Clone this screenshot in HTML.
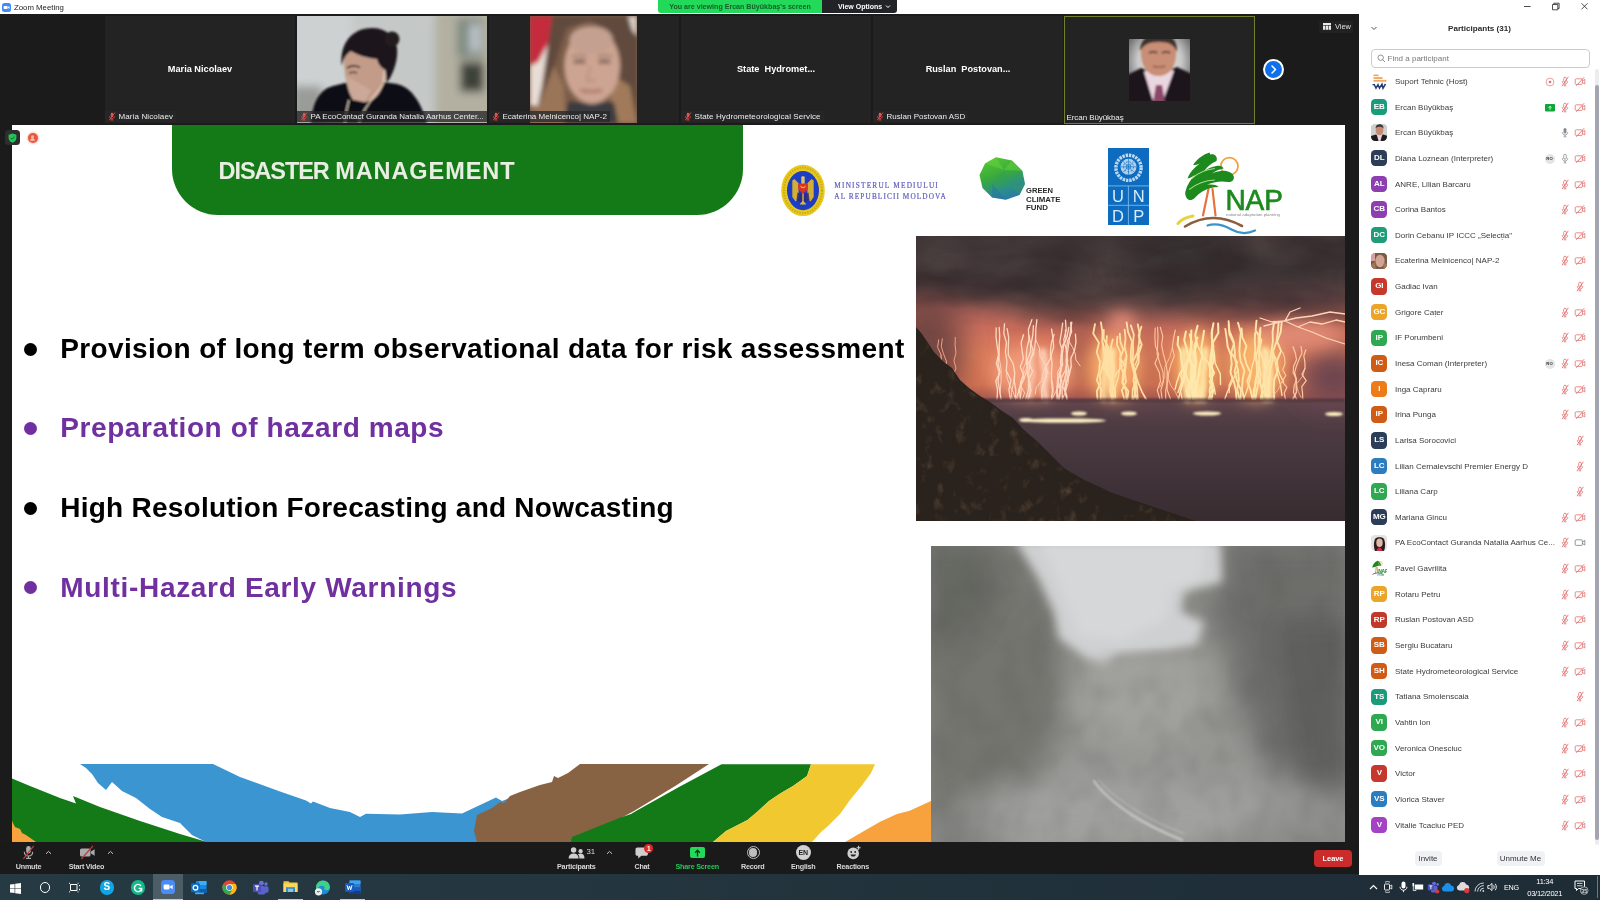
<!DOCTYPE html>
<html>
<head>
<meta charset="utf-8">
<title>Zoom Meeting</title>
<style>
*{box-sizing:border-box;margin:0;padding:0}
html,body{width:1600px;height:900px;overflow:hidden;background:#1b1b1b;font-family:"Liberation Sans",sans-serif;}
body{will-change:transform;position:relative}
.abs{position:absolute}
#titlebar{left:0;top:0;width:1359px;height:14.400px;background:#fff}
#titlebar .t{left:14px;top:2.600px;font-size:7.800px;color:#222;white-space:nowrap;line-height:10px}
#viewing{left:658px;top:0;width:164px;height:13px;background:#23d959;border-radius:0 0 0 3px;color:#14602a;font-weight:bold;font-size:7.100px;line-height:14.600px;text-align:center;white-space:nowrap;overflow:hidden}
#viewopt{left:822px;top:0;width:75px;height:13px;background:#222326;border-radius:0 0 3px 0;color:#fff;font-weight:bold;font-size:7px;line-height:14.600px;text-align:center;white-space:nowrap;padding-left:10px;overflow:hidden}
#gallery{left:0;top:14px;width:1359px;height:111px;background:#1b1b1b}
.tile{position:absolute;top:16px;height:107px;width:190px;background:#232323;overflow:hidden}
.tile .nm{position:absolute;left:0;right:0;top:47px;text-align:center;color:#fff;font-weight:bold;font-size:9.200px;line-height:12px;white-space:pre}
.tile .lb{position:absolute;left:0;bottom:1px;height:11px;padding:0 3px 0 13.500px;background:rgba(40,40,42,.78);color:#ececec;font-size:8px;line-height:11px;white-space:nowrap}
.tile .lb.nomic{padding-left:3px}
.tile .lb svg{position:absolute;left:3px;top:1px}
#slide{left:12px;top:125px;width:1333px;height:717px;background:#fff;overflow:hidden}
#slidetop{left:12.300px;top:124.600px;width:1332.700px;height:1px;background:#fff}
#greenhdr{left:160px;top:-10px;width:571px;height:100px;background:#137a17;border-radius:0 0 46px 46px}
#hdrtxt{left:206.600px;top:33px;font-size:23.500px;font-weight:bold;color:#e9eee2;letter-spacing:-.03px;white-space:nowrap;line-height:26px}
.bl{position:absolute;left:48.300px;font-size:28px;font-weight:bold;white-space:nowrap;line-height:30px;color:#000}
.bl.p{color:#7030a0}
.dot{position:absolute;left:12px;width:13px;height:13px;border-radius:50%;background:#000}
.dot.p{background:#7030a0}
#toolbar{left:0;top:842px;width:1359px;height:32px;background:#1a1a1a}
.tb{position:absolute;top:19.800px;font-size:7.200px;font-weight:bold;color:#d8d8d8;letter-spacing:-.22px;white-space:nowrap;line-height:9px;transform:translateX(-50%)}
#taskbar{left:0;top:874px;width:1600px;height:26px;background:linear-gradient(90deg,#263a44 0%,#24363f 35%,#1f2e38 80%,#1e2c36 100%)}
#panel{left:1359px;top:0;width:241px;height:875px;background:#fff;z-index:2}
.row{position:absolute;left:0;width:241px;height:18px}
.av{position:absolute;left:12px;top:.3px;width:16.400px;height:16.400px;border-radius:4.2px;color:#fff;font-weight:bold;font-size:8px;letter-spacing:-.2px;line-height:16.400px;text-align:center;overflow:hidden}
.pn{position:absolute;left:36px;top:3px;font-size:8px;line-height:11px;color:#3a3a3a;white-space:nowrap}
.ic{position:absolute;top:3px}
.btn{position:absolute;top:851px;height:15px;background:#f0f1f5;border-radius:4px;font-size:8px;line-height:15px;color:#333;text-align:center}
.tr{position:absolute;color:#fff;font-size:8px;line-height:10px;white-space:nowrap;transform:translateX(-50%)}
</style>
</head>
<body>
<div id="titlebar" class="abs">
  <svg class="abs" style="left:2px;top:3px" width="9" height="9" viewBox="0 0 9 9"><rect width="9" height="9" rx="2.5" fill="#3f8cf6"/><rect x="1.6" y="3" width="4" height="3" rx=".7" fill="#fff"/><path d="M5.9 4.2 7.5 3.1v2.8L5.9 4.8z" fill="#fff"/></svg>
  <div class="abs t">Zoom Meeting</div>
</div>
<div id="viewing" class="abs">You are viewing Ercan Büyükbaş's screen</div>
<div id="viewopt" class="abs">View Options <svg width="6" height="5" viewBox="0 0 6 5" style="margin-left:1px"><path d="M1 1.5 3 3.5 5 1.5" fill="none" stroke="#fff" stroke-width="1"/></svg></div>
<div id="gallery" class="abs"></div>
<div id="slidetop" class="abs"></div>
<svg width="0" height="0" style="position:absolute"><defs>
<symbol id="mutemic" viewBox="0 0 9 10"><rect x="3.100" y=".8" width="2.800" height="5" rx="1.400" fill="#e8524a"/><path d="M1.800 4.600c0 1.800 1.200 2.800 2.700 2.800s2.700-1 2.700-2.800M4.500 7.400v1.600M3 9h3" stroke="#e8524a" stroke-width=".8" fill="none"/><path d="M7.800 .6 1.400 9.200" stroke="#e8524a" stroke-width="1"/></symbol>
<filter id="tb1" x="-20%" y="-20%" width="140%" height="140%"><feGaussianBlur stdDeviation="1"/></filter>
<filter id="tb2" x="-20%" y="-20%" width="140%" height="140%"><feGaussianBlur stdDeviation="2"/></filter>
<filter id="tb4" x="-30%" y="-30%" width="160%" height="160%"><feGaussianBlur stdDeviation="4"/></filter>
</defs></svg>
<div class="tile" style="left:105px"><div class="nm">Maria Nicolaev</div><div class="lb" style="letter-spacing:.12px"><svg width="8" height="9"><use href="#mutemic"/></svg>Maria Nicolaev</div></div>
<div class="tile" style="left:297px">
<svg class="abs" style="left:0;top:0" width="190" height="107" viewBox="0 0 190 107">
<rect width="190" height="107" fill="#c4c8c7"/>
<g filter="url(#tb4)">
<rect x="-5" y="-5" width="60" height="80" fill="#cdd1d2"/>
<rect x="138" y="-5" width="60" height="120" fill="#b3b0a2"/>
<rect x="160" y="2" width="26" height="40" fill="#7e8a80"/>
<rect x="163" y="46" width="24" height="30" fill="#3c4238"/>
<rect x="172" y="8" width="12" height="28" fill="#b8c0c4"/>
<rect x="-5" y="70" width="30" height="40" fill="#9a9c9a"/>
</g>
<g filter="url(#tb1)">
<path d="M14 107c1-16 6-33 22-37l28-7 36 5c16 4 24 20 30 39z" fill="#0f0f12"/>
<path d="M47 44c0-14 10-22 22-22 14 0 22 10 22 24 0 10-2 18-6 26-3 8-10 14-17 14-6 0-12-4-15-10-4-8-6-20-6-32z" fill="#c29b89"/>
<path d="M50 60c-1 8 2 18 6 24l12 2 6-12z" fill="#cba897"/>
<path d="M45 50c-3-22 10-38 30-38 14 0 23 8 25 20 1 10-2 20-6 28-1 3-3 5-5 6 1-6 0-10-2-13-4-2-6-6-7-10-10-1-20-4-26-8-5 3-8 8-9 15z" fill="#1d191a"/>
<circle cx="95" cy="23" r="7.500" fill="#211c1d"/>
<path d="M50 52c4-2.500 9-2.500 13-.5" stroke="#30221f" stroke-width="1.600" fill="none"/>
<path d="M52 57c3-1 6-1 8 0" stroke="#4a3430" stroke-width="1.400" fill="none"/>
<path d="M88 54c-1 4-2 9-1.500 13M86 68c-6 10-18 20-24 38M52 84c-2 8-4 16-4 23" stroke="#e8dcc8" stroke-width="1.200" fill="none"/>
</g>
</svg>
<div class="lb"><svg width="8" height="9"><use href="#mutemic"/></svg>PA EcoContact Guranda Natalia Aarhus Center...</div></div>
<div class="tile" style="left:489px">
<svg class="abs" style="left:41px;top:0" width="107" height="107" viewBox="0 0 107 107">
<rect width="107" height="107" fill="#7a5c48"/>
<g filter="url(#tb2)">
<path d="M0 0H24L18 30 6 50H0z" fill="#c62a3c"/>
<path d="M0 50 8 46 20 24 26 0H34L24 40 14 70 8 90H0z" fill="#e8ddd6"/>
<path d="M22 0H107V107H70L86 60 80 20 60 4 36 12 24 50 14 107H4L12 70z" fill="#60483c"/>
<path d="M8 90 24 50 34 70 36 107H0V96z" fill="#9a7458"/>
<path d="M84 60 100 70 107 107H76z" fill="#a07a5a"/>
<path d="M98 0H107V20L102 14z" fill="#d8d0c8"/>
<path d="M38 86H84L88 107H34z" fill="#3a3a40"/>
<ellipse cx="62" cy="50" rx="28" ry="38" fill="#cda492"/>
<ellipse cx="61" cy="24" rx="22" ry="14" fill="#c4a090"/>
<path d="M42 41c4-2 10-2 14 0M68 41c4-2 10-2 14 0" stroke="#7a5a4c" stroke-width="1.600" fill="none"/><path d="M44 46.500c3-1.500 8-1.500 11 0M69 46.500c3-1.500 8-1.500 11 0" stroke="#3a2a28" stroke-width="2.600" fill="none"/>
<path d="M50 74c6 2 16 2 22 0" stroke="#a86860" stroke-width="2.400" fill="none"/>
<path d="M60 50c-1 6-3 10-3 14 2 1.500 6 1.500 8 0" stroke="#b08878" stroke-width="1.600" fill="none"/>
</g>
</svg>
<div class="lb"><svg width="8" height="9"><use href="#mutemic"/></svg>Ecaterina Melnicenco| NAP-2</div></div>
<div class="tile" style="left:681px"><div class="nm">State  Hydromet...</div><div class="lb" style="letter-spacing:.09px"><svg width="8" height="9"><use href="#mutemic"/></svg>State Hydrometeorological Service</div></div>
<div class="tile" style="left:873px"><div class="nm">Ruslan  Postovan...</div><div class="lb"><svg width="8" height="9"><use href="#mutemic"/></svg>Ruslan Postovan ASD</div></div>
<div class="tile" style="left:1064px;width:191px;top:15.500px;height:108px;border:1px solid #6f7f2c">
<svg class="abs" style="left:64px;top:22.500px" width="61" height="62" viewBox="0 0 61 62">
<defs><radialGradient id="erbg" cx=".5" cy=".35" r=".6"><stop offset="0" stop-color="#f4f4f4"/><stop offset=".6" stop-color="#c8c8c8"/><stop offset="1" stop-color="#6a6a6a"/></radialGradient></defs>
<rect width="61" height="62" fill="url(#erbg)"/>
<g filter="url(#tb1)">
<path d="M-2 36 12 29 20 32 30 52 40 31 48 28 63 35V64H-2z" fill="#1b181a"/>
<path d="M15 33 22 28 38 28 45 32 34 62H24z" fill="#ead6e0"/>
<path d="M27 46h6l3 17h-12z" fill="#8a4668"/>
<path d="M12 14C12 2 20-4 29.500-4S48 2 47 15c0 12-6 22-17.500 22S12 26 12 14z" fill="#c88e76"/>
<path d="M11 12C11 0 20-6 30-6S49 0 48 13c-3-7-7-10-18-10S15 6 11 12z" fill="#3a302c"/>
<path d="M20 14c3-1.500 6-1.500 8 0M33 14c3-1.500 6-1.500 8 0" stroke="#3a2a26" stroke-width="1.600" fill="none"/>
<path d="M24 27c3 1.500 9 1.500 12 0" stroke="#9a5a50" stroke-width="1.400" fill="none"/>
</g>
</svg>
<div class="lb nomic" style="background:none;bottom:0;padding-left:1.500px;letter-spacing:-.08px">Ercan Büyükbaş</div></div>
<!-- next arrow -->
<div class="abs" style="left:1263px;top:59px;width:21px;height:21px;border-radius:50%;background:#fff"></div>
<div class="abs" style="left:1265px;top:61px;width:17px;height:17px;border-radius:50%;background:#0e71eb"></div>
<svg class="abs" style="left:1269px;top:64px" width="9" height="11" viewBox="0 0 9 11"><path d="M3 2 6.500 5.500 3 9" stroke="#fff" stroke-width="1.500" fill="none" stroke-linecap="round" stroke-linejoin="round"/></svg>
<!-- view button -->
<div class="abs" style="left:1319px;top:21px;width:34px;height:12px;background:#222;border-radius:2px"></div>
<svg class="abs" style="left:1323px;top:23px" width="8" height="7" viewBox="0 0 8 7"><rect x="0" y="0" width="8" height="2" fill="#e8e8e8"/><rect x="0" y="2.600" width="2.300" height="4.200" fill="#e8e8e8"/><rect x="2.850" y="2.600" width="2.300" height="4.200" fill="#e8e8e8"/><rect x="5.700" y="2.600" width="2.300" height="4.200" fill="#e8e8e8"/></svg>
<div class="abs" style="left:1335px;top:22px;font-size:7.400px;line-height:10px;color:#e0e0e0">View</div>
<!-- slide overlay icons -->
<div id="slide" class="abs">
<div id="greenhdr" class="abs"></div>
<div id="hdrtxt" class="abs"><span style="letter-spacing:-1.1px">DISASTER</span> <span style="letter-spacing:.93px">MANAGEMENT</span></div>
<div class="dot" style="top:217.5px"></div>
<div class="bl" style="top:208.500px;letter-spacing:.348px">Provision of long term observational data for risk assessment</div>
<div class="dot p" style="top:296.5px"></div>
<div class="bl p" style="top:288.200px;letter-spacing:.58px">Preparation of hazard maps</div>
<div class="dot" style="top:376.5px"></div>
<div class="bl" style="top:367.900px;letter-spacing:.237px">High Resolution Forecasting and Nowcasting</div>
<div class="dot p" style="top:456px"></div>
<div class="bl p" style="top:447.600px;letter-spacing:.68px">Multi-Hazard Early Warnings</div>
<svg class="abs" style="left:0;top:0" width="1333" height="717" viewBox="12 125 1333 717" font-family="Liberation Sans, sans-serif">
<defs>
<filter id="b05" x="-20%" y="-20%" width="140%" height="140%"><feGaussianBlur stdDeviation=".5"/></filter>
<filter id="b1" x="-20%" y="-20%" width="140%" height="140%"><feGaussianBlur stdDeviation="1"/></filter>
<filter id="b2" x="-20%" y="-20%" width="140%" height="140%"><feGaussianBlur stdDeviation="2"/></filter>
<filter id="b3" x="-20%" y="-20%" width="140%" height="140%"><feGaussianBlur stdDeviation="3"/></filter>
<filter id="b5" x="-30%" y="-30%" width="160%" height="160%"><feGaussianBlur stdDeviation="5"/></filter>
<filter id="b8" x="-30%" y="-30%" width="160%" height="160%"><feGaussianBlur stdDeviation="8"/></filter>
<filter id="b14" x="-40%" y="-40%" width="180%" height="180%"><feGaussianBlur stdDeviation="14"/></filter>
<linearGradient id="gcf" x1="0.2" y1="0" x2="0.6" y2="1"><stop offset="0" stop-color="#55c832"/><stop offset=".45" stop-color="#38a83e"/><stop offset=".75" stop-color="#2d8f86"/><stop offset="1" stop-color="#2b7ba6"/></linearGradient>
</defs>
<!-- Ministry emblem -->
<g filter="url(#b05)">
<ellipse cx="803" cy="190.400" rx="21.800" ry="25.700" fill="#e8c81e"/>
<ellipse cx="803" cy="190.400" rx="19" ry="22.800" fill="none" stroke="#a08a24" stroke-width="2" stroke-dasharray="1.300 1.400" opacity=".5"/>
<ellipse cx="803" cy="190.600" rx="16" ry="19.600" fill="#1d3ec4"/>
<path d="M792.300 180.500 794.500 179 798.600 183.200V198.500L795.500 201.500 792.300 197z" fill="#d2ae34"/>
<path d="M813.700 180.500 811.500 179 807.400 183.200V198.500L810.500 201.500 813.700 197z" fill="#d2ae34"/>
<path d="M801.300 177.200C801.300 176 804.700 176 804.700 177.200V184H801.300z" fill="#dcc070"/>
<path d="M798.200 183.500H807.800V189.500L803 193.600 798.200 189.500z" fill="#d9302a"/>
<path d="M800.600 186.200A2.600 2.600 0 0 0 805.400 186.200 2.900 2.900 0 0 1 800.600 186.200z" fill="#f0c828" stroke="#f0c828" stroke-width=".8"/>
<path d="M797.500 192.500 803 194.500 808.500 192.500 809.500 200 803 203 796.500 200z" fill="#30287e" opacity=".85"/>
<path d="M803 193.500V205M800.500 204.500 803 201.500 805.500 204.500" stroke="#e0c23a" stroke-width="1.300" fill="none"/>
</g>
<g fill="#5f5bbb" font-family="Liberation Serif, serif" font-size="7.300" filter="url(#b05)" stroke="#5f5bbb" stroke-width=".18">
<text x="834.300" y="188.400" textLength="103.500" lengthAdjust="spacing">MINISTERUL MEDIULUI</text>
<text x="834.300" y="198.800" textLength="111.500" lengthAdjust="spacing">AL REPUBLICII MOLDOVA</text>
</g>
<!-- GCF -->
<g filter="url(#b05)">
<path d="M996 157.200 1012 160.500 1022.500 171 1025 184 1019.500 195 1006 199.800 992 197.500 982.500 188 979.500 175 985 163.500z" fill="url(#gcf)"/>
<path d="M996 157.200 1004 170 985 163.500zM1004 170 1022.500 171 1012 160.500z" fill="#6ad83a" opacity=".45"/>
<path d="M1004 170 1010 186 992 184zM1010 186 1025 184 1019.500 195z" fill="#2f9d57" opacity=".4"/>
<path d="M992 184 1006 199.800 992 197.500z" fill="#2a6fa8" opacity=".4"/>
</g>
<g fill="#2b2b2b" font-weight="bold" font-size="6.600" filter="url(#b05)">
<text x="1026" y="193.200" textLength="27" lengthAdjust="spacingAndGlyphs">GREEN</text>
<text x="1026" y="201.900" textLength="34.500" lengthAdjust="spacingAndGlyphs">CLIMATE</text>
<text x="1026" y="210.100" textLength="22" lengthAdjust="spacingAndGlyphs">FUND</text>
</g>
<!-- UNDP -->
<rect x="1108" y="148" width="41" height="77" fill="#0d6cc0"/>
<g stroke="#7db8e8" stroke-width=".9"><path d="M1108 185.900h41M1108 205.300h41M1128.400 185.900v39.100"/></g>
<g filter="url(#b05)">
<circle cx="1128.500" cy="167.800" r="12.600" fill="none" stroke="#d6e9f8" stroke-width="3.400" stroke-dasharray="2.400 .9" opacity=".88"/>
<circle cx="1128.500" cy="166.800" r="8" fill="#c6def3" opacity=".88"/>
<circle cx="1128.500" cy="166.800" r="5" fill="none" stroke="#0d6cc0" stroke-width=".8" stroke-dasharray="1.800 1.600"/>
<circle cx="1128.500" cy="166.800" r="2.400" fill="none" stroke="#0d6cc0" stroke-width=".7"/>
<path d="M1120.500 166.800h16M1128.500 158.800v16M1123 161.300l11 11M1134 161.300l-11 11" stroke="#0d6cc0" stroke-width=".6"/>
</g>
<g fill="#d8ecfb" font-size="16.500" text-anchor="middle">
<text x="1118" y="202.300">U</text><text x="1138.800" y="202.300">N</text>
<text x="1118" y="222">D</text><text x="1138.800" y="222">P</text>
</g>
<!-- NAP -->
<g filter="url(#b05)">
<circle cx="1229.400" cy="166.300" r="8.600" fill="none" stroke="#f0a040" stroke-width="1.700"/>
<path d="M1208.500 189 1203 215.500M1212.500 189 1215.500 215.500" stroke="#e8713c" stroke-width="2.200" fill="none" stroke-linecap="round"/>
<path transform="translate(1185 0) scale(.85 1) translate(-1185 0)" d="M1214 152.500c-6 1.500-14 5.500-19.500 12.500 3 0 5-.5 8-1.500-6 3.500-12 9-14.500 15 3-.5 6-2 9-3.500-5 4-9.500 9.500-11.500 16.500-1 4 1.500 8 5 8.500 4 .5 7-3 10-5.500 6-4.500 15-7.500 24-7.500-3-2.500-9-3-14-2 7-3 17-4.500 25-3 3.500.5 7.500-1.500 7-5-.5-3.500-5-5.500-9.500-6-5-.5-11 .5-16 2.500 3.500-2.500 8.500-4.500 13.500-5-1.500-2.500-5-3-8.500-2.500-5 .5-10 2.500-14.500 5 4-4.500 9-8 14.500-10 1.500-3-.5-5.500-3-6.500-1.500-.5-3.500-.5-4.500 0z" fill="#1a8a1c"/>
<path transform="translate(1185 0) scale(.85 1) translate(-1185 0)" d="M1193 178.500c7-5.500 17-9 27-10M1190 189.500c8-5.500 18-9 30-9.500" stroke="#b8e8a0" stroke-width="1.100" fill="none" opacity=".9"/>
<path d="M1178 223.500c3.500-4 9-6.500 15-7.500" stroke="#e8d23c" stroke-width="3" fill="none" stroke-linecap="round"/>
<path d="M1185 226.500c18-11 38-11 57-.5" stroke="#8b5e3c" stroke-width="2.600" fill="none" stroke-linecap="round"/>
<path d="M1207.500 225.500c9-3 17 0 24 4 8 4.500 16 4.500 23.500 1" stroke="#3a94c8" stroke-width="2.200" fill="none" stroke-linecap="round"/>
</g>
<text x="1225.400" y="210.300" font-size="28.600" fill="#1d8a1d" stroke="#1d8a1d" stroke-width=".7" textLength="57.500" lengthAdjust="spacingAndGlyphs">NAP</text>
<text x="1226" y="215.600" font-size="3.800" fill="#888" textLength="54" lengthAdjust="spacingAndGlyphs" filter="url(#b05)">national adaptation planning</text>
<!-- brush strokes -->
<g>
<path d="M80 764H213L240 777 280 791.500 306 800.500 311 803.500 313 801.500 330 808 350 812 360 817 366 813.800 400 814.600 432 812 462 813.400 496 797.400 502 801 510 798 510 842H206L192 835 180 823 162 817 150 809 136 798 122 791 112 782 106 790 98 783 92 774 86 768z" fill="#3a95d0"/>
<path d="M12 778.500 30 786 60 798 76 803.500 73 796 100 807 140 821 180 834 207 842H12z" fill="#137a17"/>
<path d="M12 821 15 827 20 829 22 833 26 835 36 842H12z" fill="#f8a23e"/>
<path d="M580 764H709L676 785.500 634 811 621 818 572 838 570 842H477L474 831 477 815 492 808 500 802 504 803 510 796 520 792 540 785 552 782 554 776 558 778 568 773z" fill="#876344"/>
<path d="M721.500 764.300H811L807 776 793 786 781 793 769 801 757 812 747.500 820 726 831 713 842H570L572 837 620.500 817.500 631 814 636 811 679 787z" fill="#137a17"/>
<path d="M811 764.300H875L871 773 861.500 786 850 800 840 814 828 826 821 832 812 842H713L726 831 747.500 820 757 812 769 801 781 793 793 786 807 776z" fill="#f1c830"/>
<path d="M845 842 864 831 880.500 821.500 897 814 909 811 931 801V842z" fill="#f8a23e"/>
</g>
<defs>
<linearGradient id="cmg" x1="0" y1="0" x2="0" y2="1"><stop offset="0" stop-color="#fff"/><stop offset=".6" stop-color="#fff"/><stop offset="1" stop-color="#000"/></linearGradient><mask id="cloudmask"><rect x="916" y="236" width="429" height="100" fill="url(#cmg)"/></mask>
<clipPath id="cl1"><rect x="916" y="236" width="429" height="285"/></clipPath>
<linearGradient id="sky1" x1="0" y1="0" x2="0" y2="1">
<stop offset="0" stop-color="#3f3536"/><stop offset=".13" stop-color="#473b3b"/><stop offset=".2" stop-color="#5e4343"/><stop offset=".255" stop-color="#9a5a52"/><stop offset=".32" stop-color="#cf705e"/><stop offset=".42" stop-color="#dc7c5a"/><stop offset=".52" stop-color="#d27252"/><stop offset=".568" stop-color="#a85a50"/><stop offset=".582" stop-color="#5e444c"/><stop offset=".66" stop-color="#4e3c43"/><stop offset=".8" stop-color="#43353b"/><stop offset="1" stop-color="#382c31"/></linearGradient>
<filter id="rock" x="0" y="0" width="100%" height="100%" color-interpolation-filters="sRGB"><feTurbulence type="fractalNoise" baseFrequency=".09 .07" numOctaves="3" seed="4" result="n"/><feColorMatrix in="n" type="matrix" values="0 0 0 0 .31  0 0 0 0 .25  0 0 0 0 .2  2.4 1.2 0 0 -1.95"/><feComposite in2="SourceGraphic" operator="in"/></filter>
<filter id="cloud" x="0" y="0" width="100%" height="100%" color-interpolation-filters="sRGB"><feTurbulence type="fractalNoise" baseFrequency=".012 .03" numOctaves="3" seed="11" result="n"/><feColorMatrix in="n" type="matrix" values="0 0 0 0 .17  0 0 0 0 .13  0 0 0 0 .14  2.2 0 0 0 -.8"/><feComposite in2="SourceGraphic" operator="in"/></filter>
</defs>
<g clip-path="url(#cl1)">
<rect x="916" y="236" width="429" height="285" fill="url(#sky1)"/>
<g filter="url(#b14)">
<ellipse cx="1010" cy="262" rx="130" ry="28" fill="#4a3d3e"/>
<ellipse cx="1245" cy="258" rx="130" ry="34" fill="#393032"/>
<ellipse cx="1120" cy="298" rx="120" ry="14" fill="#4e3c3c"/>
<ellipse cx="1290" cy="300" rx="80" ry="12" fill="#5a4042"/>
<ellipse cx="1290" cy="236" rx="60" ry="10" fill="#6a5a56"/>
<ellipse cx="928" cy="350" rx="36" ry="56" fill="#744642"/>
<ellipse cx="1334" cy="378" rx="36" ry="30" fill="#6c4450"/>
<ellipse cx="1080" cy="355" rx="9" ry="40" fill="#8a4c44"/>
<ellipse cx="1144" cy="360" rx="6" ry="36" fill="#a05a4c"/>
<ellipse cx="1224" cy="365" rx="6" ry="32" fill="#a85e4e"/>
</g>
<g mask="url(#cloudmask)"><rect x="916" y="236" width="429" height="100" fill="#000" filter="url(#cloud)" opacity=".6"/></g>
<g filter="url(#b8)">
<ellipse cx="1032" cy="372" rx="42" ry="26" fill="#f09a78"/>
<ellipse cx="1114" cy="368" rx="26" ry="32" fill="#f8a868"/>
<ellipse cx="1196" cy="366" rx="20" ry="34" fill="#fcb466"/>
<ellipse cx="1256" cy="366" rx="26" ry="34" fill="#fab068"/>
<ellipse cx="1300" cy="335" rx="44" ry="14" fill="#e08a74"/>
<ellipse cx="1122" cy="322" rx="14" ry="10" fill="#e8907c"/>
</g>
<g filter="url(#b2)" fill="none" stroke-linecap="round" stroke-linejoin="round">
<path d="M1104.5 350 1104.5 362.2 1104.5 374.5 1103 386.8 1103.5 399" stroke="#ffe2a6" stroke-width="5"/>
<path d="M1113.4 350 1112.9 362.2 1113.7 374.5 1112.6 386.8 1112.6 399" stroke="#ffe2a6" stroke-width="5"/>
<path d="M1108.4 350 1110.1 362.2 1110.7 374.5 1110.9 386.8 1113.2 399" stroke="#ffe2a6" stroke-width="5"/>
<path d="M1205.4 350 1204.5 362.2 1202.7 374.5 1203.2 386.8 1202.6 399" stroke="#ffe8a8" stroke-width="6"/>
<path d="M1183.7 350 1184.4 362.2 1184 374.5 1186.3 386.8 1187.5 399" stroke="#ffe8a8" stroke-width="6"/>
<path d="M1192.1 350 1193.8 362.2 1192.8 374.5 1196.5 386.8 1196.7 399" stroke="#ffe8a8" stroke-width="6"/>
<path d="M1265 350 1263.2 362.2 1265 374.5 1264.4 386.8 1264.9 399" stroke="#ffe2a6" stroke-width="5"/>
<path d="M1266.8 350 1269.1 362.2 1270.6 374.5 1270.4 386.8 1270.4 399" stroke="#ffe2a6" stroke-width="5"/>
<path d="M1263 350 1265.7 362.2 1264.5 374.5 1267.1 386.8 1266.1 399" stroke="#ffe2a6" stroke-width="5"/>
<path d="M1044.1 350 1046.1 362.2 1047.5 374.5 1044.9 386.8 1047.5 399" stroke="#ffd8c0" stroke-width="3"/>
<path d="M1033.1 350 1031.1 362.2 1033.4 374.5 1030.3 386.8 1030.5 399" stroke="#ffd8c0" stroke-width="3"/>
<path d="M1040.9 350 1041.8 362.2 1044.4 374.5 1042.4 386.8 1044.5 399" stroke="#ffd8c0" stroke-width="3"/>
</g>
<g filter="url(#b05)" fill="none" stroke-linecap="round" stroke-linejoin="round">
<path d="M938.7 339.8 937.6 347.2 941 354.6 941.2 362 940.6 369.4 944 376.8 942.6 384.2 945.7 391.6 947.1 399" stroke="#f0a088" stroke-width="1"/>
<path d="M941 354.6 941.6 360 943.5 365.5 942.6 370.9 942.5 376.3" stroke="#f0a088" stroke-width="0.7"/>
<path d="M942.3 338.8 941.3 346.3 943.5 353.8 946.5 361.4 945.7 368.9 948.5 376.4 950.4 383.9 951.9 391.5 952.8 399" stroke="#f0a088" stroke-width="1"/>
<path d="M946.5 361.4 942.5 370.6 939.4 379.9 939.1 389.2 935.4 398.5" stroke="#f0a088" stroke-width="0.7"/>
<path d="M955.3 337.4 955.1 345.1 956 352.8 954 360.5 956 368.2 952.8 375.9 951.8 383.6 951.1 391.3 952.4 399" stroke="#f0a088" stroke-width="1"/>
<path d="M996.2 327.9 996 336.8 997.1 345.7 998.5 354.6 996.4 363.5 999.2 372.3 998 381.2 999.6 390.1 1001 399" stroke="#ffd8c0" stroke-width="1.3"/>
<path d="M1036.9 319.6 1035.8 329.5 1035.6 339.4 1034.4 349.3 1030.5 359.3 1029.2 369.2 1028.5 379.1 1028.7 389.1 1025.8 399" stroke="#ffd8c0" stroke-width="1.3"/>
<path d="M1035.6 339.4 1039.4 348 1040.1 356.5 1045.7 365.1 1048.1 373.6" stroke="#ffd8c0" stroke-width="0.9"/>
<path d="M1054.1 334.4 1051.5 342.5 1050.5 350.6 1050.5 358.6 1045.7 366.7 1046.5 374.8 1043.5 382.9 1041.7 390.9 1042.2 399" stroke="#ffd8c0" stroke-width="1.3"/>
<path d="M1045.7 366.7 1042.6 373.6 1042 380.4 1036.2 387.3 1035.3 394.1" stroke="#ffd8c0" stroke-width="0.9"/>
<path d="M1029 335.7 1030.5 343.6 1030.6 351.5 1027.4 359.4 1027.9 367.3 1027.5 375.3 1030.1 383.2 1030.3 391.1 1027.8 399" stroke="#ffd8c0" stroke-width="1.3"/>
<path d="M1027.4 359.4 1023 369.3 1023.8 379.2 1018.8 389.1 1017.6 399" stroke="#ffd8c0" stroke-width="0.9"/>
<path d="M1007.1 328.7 1008.7 337.5 1008.3 346.3 1008.3 355.1 1013.2 363.8 1014.7 372.6 1014.3 381.4 1015.8 390.2 1015.6 399" stroke="#ffd8c0" stroke-width="1.3"/>
<path d="M1014.7 372.6 1013.9 379.2 1012.9 385.8 1011.4 392.4 1011.9 399" stroke="#ffd8c0" stroke-width="0.9"/>
<path d="M1065.5 320.2 1066.2 330 1063.7 339.9 1066.3 349.7 1066.4 359.6 1068.7 369.4 1067.1 379.3 1064.5 389.1 1066.9 399" stroke="#ffd8c0" stroke-width="1.3"/>
<path d="M1068.7 369.4 1065.6 376.3 1063.2 383.2 1059.8 390.1 1058.8 397" stroke="#ffd8c0" stroke-width="0.9"/>
<path d="M1068.8 327.3 1067.2 336.3 1063.7 345.2 1062.3 354.2 1062.1 363.2 1060.2 372.1 1061.6 381.1 1056.7 390 1057 399" stroke="#ffd8c0" stroke-width="1.3"/>
<path d="M1062.1 363.2 1057.7 372.1 1057.2 381.1 1056.6 390 1052.2 399" stroke="#ffd8c0" stroke-width="0.9"/>
<path d="M1062.7 323.2 1061.4 332.7 1059.8 342.2 1062.4 351.6 1060.5 361.1 1061.2 370.6 1058.3 380.1 1057.2 389.5 1058 399" stroke="#ffd8c0" stroke-width="1.3"/>
<path d="M1075.4 334.1 1076 342.2 1074.5 350.3 1070.8 358.5 1071.2 366.6 1069.3 374.7 1066.6 382.8 1065.5 390.9 1066.9 399" stroke="#ffd8c0" stroke-width="1.3"/>
<path d="M1071.2 366.6 1068.5 374.7 1068.2 382.8 1065.7 390.9 1062.6 399" stroke="#ffd8c0" stroke-width="0.9"/>
<path d="M1031.9 319.6 1028.4 329.5 1028.9 339.5 1026.8 349.4 1026.1 359.3 1027.3 369.2 1023.9 379.2 1019.3 389.1 1020.5 399" stroke="#ffd8c0" stroke-width="1.3"/>
<path d="M1023.5 334.7 1021.1 342.7 1022.1 350.8 1023.4 358.8 1020.3 366.8 1023.4 374.9 1020.6 382.9 1021.2 391 1020.1 399" stroke="#ffd8c0" stroke-width="1.3"/>
<path d="M1023.4 374.9 1021.5 380.9 1021.5 386.9 1024.6 393 1022.4 399" stroke="#ffd8c0" stroke-width="0.9"/>
<path d="M999.2 327.3 999.7 336.3 999.2 345.2 998.9 354.2 998 363.2 1000.1 372.1 995.8 381.1 997.5 390 997 399" stroke="#ffd8c0" stroke-width="1.3"/>
<path d="M999.2 345.2 999.1 357.2 1001.1 369.2 1001.1 381.2 1000 393.2" stroke="#ffd8c0" stroke-width="0.9"/>
<path d="M1004.5 323.9 1003.8 333.3 1006.4 342.6 1005.4 352 1007 361.4 1006.3 370.8 1011 380.2 1008.9 389.6 1010.4 399" stroke="#ffd8c0" stroke-width="1.3"/>
<path d="M1006.3 370.8 1007.1 377.9 1009.4 384.9 1013.2 392 1015.4 399" stroke="#ffd8c0" stroke-width="0.9"/>
<path d="M1065.4 330.2 1066 338.8 1061.9 347.4 1061 356 1062.7 364.6 1059.2 373.2 1058.1 381.8 1060.5 390.4 1058.7 399" stroke="#ffd8c0" stroke-width="1.3"/>
<path d="M1059.2 373.2 1061.5 379 1062.2 384.8 1064.3 390.6 1067.2 396.4" stroke="#ffd8c0" stroke-width="0.9"/>
<path d="M1051.6 329.2 1052.9 338 1053.7 346.7 1051.2 355.4 1052.1 364.1 1051.5 372.8 1051.5 381.6 1052.4 390.3 1051.4 399" stroke="#ffd8c0" stroke-width="1.3"/>
<path d="M1051.5 372.8 1051.6 379.4 1053.1 385.9 1053.3 392.5 1051.7 399" stroke="#ffd8c0" stroke-width="0.9"/>
<path d="M1071.8 322.1 1070.3 331.7 1069 341.3 1067.7 350.9 1066.1 360.5 1066.8 370.1 1064.3 379.8 1062 389.4 1062.4 399" stroke="#ffd8c0" stroke-width="1.3"/>
<path d="M1069 341.3 1072.6 347.4 1075.2 353.6 1075.9 359.8 1080.1 365.9" stroke="#ffd8c0" stroke-width="0.9"/>
<path d="M1070.7 322.4 1071.6 332 1067.3 341.5 1066.4 351.1 1067.6 360.7 1065.4 370.3 1060.5 379.8 1060.5 389.4 1059.4 399" stroke="#ffd8c0" stroke-width="1.3"/>
<path d="M1067.6 360.7 1065.4 368.4 1066 376 1065.3 383.7 1065.4 391.4" stroke="#ffd8c0" stroke-width="0.9"/>
<path d="M1033.4 325.7 1032.8 334.9 1031.1 344 1033.9 353.2 1028.9 362.3 1032.5 371.5 1028.3 380.7 1031 389.8 1028.5 399" stroke="#ffd8c0" stroke-width="1.3"/>
<path d="M1028.9 362.3 1024.8 371.5 1021 380.7 1018.9 389.8 1016 399" stroke="#ffd8c0" stroke-width="0.9"/>
<path d="M1141.4 326.7 1138.6 335.7 1141.7 344.7 1138.9 353.8 1138.6 362.8 1134.5 371.9 1133.4 380.9 1135.7 390 1133.7 399" stroke="#ffe0a4" stroke-width="1.8"/>
<path d="M1141.7 344.7 1138.4 349.9 1137.5 355 1137.2 360.1 1135.2 365.2" stroke="#ffe0a4" stroke-width="1.3"/>
<path d="M1095 324.2 1093.2 333.5 1099 342.9 1096.7 352.2 1100 361.6 1099.2 370.9 1096.9 380.3 1101.1 389.6 1100.7 399" stroke="#ffe0a4" stroke-width="1.8"/>
<path d="M1130.8 325.3 1133.8 334.5 1132.9 343.7 1133.1 352.9 1132.1 362.1 1134.1 371.3 1136 380.6 1134.6 389.8 1136.5 399" stroke="#ffe0a4" stroke-width="1.8"/>
<path d="M1126.6 322.3 1128 331.9 1131.9 341.5 1130.9 351.1 1130.9 360.7 1133.3 370.2 1135.8 379.8 1137.1 389.4 1137.7 399" stroke="#ffe0a4" stroke-width="1.8"/>
<path d="M1133.3 370.2 1135.4 377.4 1138.8 384.6 1142 391.8 1146.5 399" stroke="#ffe0a4" stroke-width="1.3"/>
<path d="M1137.8 324.5 1139.7 333.8 1139 343.1 1137.5 352.4 1132.6 361.8 1135 371.1 1135.7 380.4 1132.7 389.7 1132.3 399" stroke="#ffe0a4" stroke-width="1.8"/>
<path d="M1135 371.1 1136.8 378.1 1139.2 385 1142 392 1145.4 399" stroke="#ffe0a4" stroke-width="1.3"/>
<path d="M1103.8 330 1103.6 338.6 1108.3 347.3 1109.4 355.9 1108.2 364.5 1107.6 373.1 1112.4 381.8 1110 390.4 1112.1 399" stroke="#ffe0a4" stroke-width="1.8"/>
<path d="M1108.3 347.3 1106.3 352.9 1106.6 358.5 1103.8 364.2 1103.7 369.8" stroke="#ffe0a4" stroke-width="1.3"/>
<path d="M1117.4 336.7 1116.8 344.5 1120.3 352.3 1120.6 360.1 1121.3 367.9 1124.3 375.6 1122.6 383.4 1128.4 391.2 1127.3 399" stroke="#ffe0a4" stroke-width="1.8"/>
<path d="M1106.9 336.1 1106.2 344 1105.9 351.8 1104.5 359.7 1102.1 367.6 1099.9 375.4 1100.4 383.3 1096.8 391.1 1097.5 399" stroke="#ffe0a4" stroke-width="1.8"/>
<path d="M1124.6 329.7 1125.6 338.4 1124.6 347 1126.6 355.7 1125.8 364.4 1124.8 373 1126 381.7 1121.8 390.3 1124.3 399" stroke="#ffe0a4" stroke-width="1.8"/>
<path d="M1126.6 355.7 1124.3 361 1122.7 366.3 1117.4 371.6 1115 377" stroke="#ffe0a4" stroke-width="1.3"/>
<path d="M1100.9 322.3 1102.4 331.9 1102.3 341.5 1103.7 351.1 1106.1 360.7 1105.4 370.3 1111.2 379.8 1112.4 389.4 1111.7 399" stroke="#ffe0a4" stroke-width="1.8"/>
<path d="M1102.3 341.5 1105.2 350.1 1107.1 358.6 1106.4 367.2 1109.1 375.7" stroke="#ffe0a4" stroke-width="1.3"/>
<path d="M1119.8 333.7 1120.4 341.9 1123.3 350 1120.1 358.2 1125.2 366.3 1122.8 374.5 1122.3 382.7 1126.2 390.8 1126.3 399" stroke="#ffe0a4" stroke-width="1.8"/>
<path d="M1120.1 358.2 1119.7 368.1 1118.2 378 1115.1 387.8 1115.4 397.7" stroke="#ffe0a4" stroke-width="1.3"/>
<path d="M1112.8 339.5 1110.8 346.9 1111.4 354.4 1112.9 361.8 1114.1 369.3 1111.9 376.7 1112.9 384.1 1114.5 391.6 1113.2 399" stroke="#ffe0a4" stroke-width="1.8"/>
<path d="M1157.6 327.2 1158 336.2 1157.6 345.2 1157.1 354.1 1159.9 363.1 1163 372.1 1163.5 381.1 1160.9 390 1162.1 399" stroke="#ffc8a0" stroke-width="1.1"/>
<path d="M1160.3 327.3 1162.8 336.2 1161.6 345.2 1163.4 354.2 1165.9 363.1 1167.3 372.1 1166.8 381.1 1167.2 390 1170.5 399" stroke="#ffc8a0" stroke-width="1.1"/>
<path d="M1167.3 372.1 1168.2 378.8 1170.9 385.5 1175.6 392.3 1178.5 399" stroke="#ffc8a0" stroke-width="0.8"/>
<path d="M1155.2 328 1154.9 336.8 1155.4 345.7 1158.7 354.6 1154.9 363.5 1159.4 372.4 1160.5 381.2 1157.3 390.1 1159.9 399" stroke="#ffc8a0" stroke-width="1.1"/>
<path d="M1175.3 330.1 1173.5 338.7 1172.4 347.3 1174.3 355.9 1171 364.5 1168.6 373.1 1167.7 381.8 1165.7 390.4 1165.7 399" stroke="#ffc8a0" stroke-width="1.1"/>
<path d="M1172.4 347.3 1169.8 357.3 1164.7 367.2 1164.8 377.2 1159.8 387.2" stroke="#ffc8a0" stroke-width="0.8"/>
<path d="M1189.8 334.4 1191.9 342.4 1190.6 350.5 1189.1 358.6 1193.4 366.7 1192.1 374.8 1195.1 382.8 1194 390.9 1194.3 399" stroke="#ffe8ac" stroke-width="2"/>
<path d="M1190.6 350.5 1187.2 361 1185.3 371.5 1181.7 382 1178 392.5" stroke="#ffe8ac" stroke-width="1.4"/>
<path d="M1178.2 336.8 1177.6 344.6 1180.8 352.4 1181.4 360.1 1182.6 367.9 1186.2 375.7 1188.8 383.5 1186.4 391.2 1189 399" stroke="#ffe8ac" stroke-width="2"/>
<path d="M1182.6 367.9 1180.9 375.7 1182.9 383.5 1180.5 391.2 1182.1 399" stroke="#ffe8ac" stroke-width="1.4"/>
<path d="M1204 330.8 1202.8 339.3 1201.3 347.9 1202.5 356.4 1199.9 364.9 1199.6 373.4 1197.1 382 1195.8 390.5 1196.5 399" stroke="#ffe8ac" stroke-width="2"/>
<path d="M1199.9 364.9 1198.3 371.8 1197.8 378.8 1195.4 385.7 1192.6 392.7" stroke="#ffe8ac" stroke-width="1.4"/>
<path d="M1191.4 330.4 1191 339 1191.1 347.5 1189.9 356.1 1191.3 364.7 1195.1 373.3 1191 381.8 1193.2 390.4 1193.4 399" stroke="#ffe8ac" stroke-width="2"/>
<path d="M1189.9 356.1 1186.6 366.8 1184.8 377.6 1181.1 388.3 1178.5 399" stroke="#ffe8ac" stroke-width="1.4"/>
<path d="M1197.5 337.5 1194.6 345.2 1195.2 352.9 1196 360.6 1195.3 368.2 1195.2 375.9 1191.8 383.6 1188.6 391.3 1189.9 399" stroke="#ffe8ac" stroke-width="2"/>
<path d="M1212.2 329.5 1211.8 338.2 1213.5 346.9 1210.5 355.6 1210 364.2 1214.2 372.9 1209.6 381.6 1213.3 390.3 1211.5 399" stroke="#ffe8ac" stroke-width="2"/>
<path d="M1218.1 323.4 1218.4 332.8 1213.1 342.3 1212.6 351.7 1213.7 361.2 1209.8 370.6 1212.1 380.1 1212.2 389.5 1208.6 399" stroke="#ffe8ac" stroke-width="2"/>
<path d="M1209.8 370.6 1209.4 376.5 1212.7 382.3 1214.3 388.2 1215.3 394" stroke="#ffe8ac" stroke-width="1.4"/>
<path d="M1185.9 331.6 1184.2 340 1186.6 348.5 1188.2 356.9 1191.7 365.3 1190.8 373.7 1192.9 382.2 1191.6 390.6 1192.6 399" stroke="#ffe8ac" stroke-width="2"/>
<path d="M1188.2 356.9 1185.5 365 1179.9 373.1 1177.1 381.2 1175.1 389.2" stroke="#ffe8ac" stroke-width="1.4"/>
<path d="M1213.5 323.3 1211.6 332.8 1212.2 342.2 1211.5 351.7 1211.7 361.1 1212.3 370.6 1212 380.1 1209.7 389.5 1210 399" stroke="#ffe8ac" stroke-width="2"/>
<path d="M1212.2 342.2 1214.3 352.8 1215.2 363.3 1220.3 373.9 1220.5 384.4" stroke="#ffe8ac" stroke-width="1.4"/>
<path d="M1197.6 325.7 1195.2 334.9 1197 344 1193.6 353.2 1196.1 362.3 1192.8 371.5 1190.2 380.7 1189.4 389.8 1189.9 399" stroke="#ffe8ac" stroke-width="2"/>
<path d="M1197 344 1199.7 350.1 1202.2 356.2 1208.3 362.3 1209.6 368.4" stroke="#ffe8ac" stroke-width="1.4"/>
<path d="M1228.6 321.1 1229.4 330.8 1233.4 340.6 1234.7 350.3 1235.2 360 1237.9 369.8 1238.9 379.5 1237.2 389.3 1239.4 399" stroke="#ffe4a8" stroke-width="1.9"/>
<path d="M1237.9 369.8 1234.2 377.1 1230.9 384.4 1227.4 391.7 1224.8 399" stroke="#ffe4a8" stroke-width="1.3"/>
<path d="M1228.7 325 1229.4 334.3 1234 343.5 1231.2 352.8 1237.1 362 1234.6 371.3 1236.9 380.5 1240.8 389.8 1240.6 399" stroke="#ffe4a8" stroke-width="1.9"/>
<path d="M1241.6 328.5 1242.3 337.3 1246.5 346.1 1244.1 355 1246.3 363.8 1250.5 372.6 1247.3 381.4 1250.6 390.2 1252.5 399" stroke="#ffe4a8" stroke-width="1.9"/>
<path d="M1256.5 320.6 1255.6 330.4 1261.4 340.2 1259.3 350 1263.3 359.8 1265.4 369.6 1263.9 379.4 1264.9 389.2 1267.5 399" stroke="#ffe4a8" stroke-width="1.9"/>
<path d="M1255.1 332.9 1254.8 341.2 1255.3 349.4 1254.6 357.7 1259.2 365.9 1260.8 374.2 1260 382.5 1262.4 390.7 1260.8 399" stroke="#ffe4a8" stroke-width="1.9"/>
<path d="M1254.6 357.7 1251.7 368 1250.2 378.3 1247.5 388.7 1243.6 399" stroke="#ffe4a8" stroke-width="1.3"/>
<path d="M1281.7 322.4 1280.7 332 1277.2 341.5 1281.1 351.1 1276.9 360.7 1277.9 370.3 1274.2 379.8 1273.7 389.4 1274.1 399" stroke="#ffe4a8" stroke-width="1.9"/>
<path d="M1260.5 330.7 1259.8 339.3 1258.3 347.8 1256.2 356.3 1256.7 364.9 1257.1 373.4 1255.3 381.9 1254.8 390.5 1253.7 399" stroke="#ffe4a8" stroke-width="1.9"/>
<path d="M1257.1 373.4 1258.8 379.8 1260.8 386.2 1263.5 392.6 1267.8 399" stroke="#ffe4a8" stroke-width="1.3"/>
<path d="M1260.5 328 1258.5 336.9 1258.8 345.8 1259.2 354.7 1258.9 363.5 1258.6 372.4 1258.5 381.3 1256.9 390.1 1255.4 399" stroke="#ffe4a8" stroke-width="1.9"/>
<path d="M1258.9 363.5 1256.9 372.4 1256.9 381.3 1253.3 390.1 1253.1 399" stroke="#ffe4a8" stroke-width="1.3"/>
<path d="M1238 322.8 1240.8 332.3 1240 341.8 1239.4 351.3 1240.5 360.9 1244.4 370.4 1242.6 379.9 1242 389.5 1244.1 399" stroke="#ffe4a8" stroke-width="1.9"/>
<path d="M1274.2 321.8 1272.6 331.5 1272.9 341.1 1271.5 350.8 1270.4 360.4 1264.4 370.1 1264.3 379.7 1261.9 389.4 1262.4 399" stroke="#ffe4a8" stroke-width="1.9"/>
<path d="M1271.5 350.8 1276 358.6 1277.4 366.4 1279.6 374.2 1283.6 381.9" stroke="#ffe4a8" stroke-width="1.3"/>
<path d="M1278.7 321.9 1277.9 331.5 1276.6 341.2 1273.2 350.8 1272.7 360.5 1270.1 370.1 1269.1 379.7 1268.1 389.4 1268 399" stroke="#ffe4a8" stroke-width="1.9"/>
<path d="M1273.2 350.8 1275.1 362 1277.1 373.1 1280.3 384.2 1282 395.4" stroke="#ffe4a8" stroke-width="1.3"/>
<path d="M1225.3 328.9 1226.6 337.7 1227.6 346.4 1231 355.2 1231.7 364 1230.5 372.7 1233.9 381.5 1235.9 390.2 1236.5 399" stroke="#ffe4a8" stroke-width="1.9"/>
<path d="M1231.7 364 1230.3 371.1 1232.3 378.2 1229.1 385.3 1229.2 392.5" stroke="#ffe4a8" stroke-width="1.3"/>
<path d="M1293 346.7 1295.4 353.2 1296.5 359.7 1293.6 366.3 1293.2 372.8 1296.4 379.4 1294.1 385.9 1293.5 392.5 1296.5 399" stroke="#ffc8a0" stroke-width="1.2"/>
<path d="M1301 346.5 1302 353.1 1298.9 359.6 1296.4 366.2 1294.6 372.7 1296.5 379.3 1296 385.9 1296.4 392.4 1293.3 399" stroke="#ffc8a0" stroke-width="1.2"/>
<path d="M1294.6 372.7 1295.7 379 1296.6 385.3 1298.3 391.6 1301.3 397.9" stroke="#ffc8a0" stroke-width="0.8"/>
<path d="M1282.7 352.1 1284.6 357.9 1285 363.8 1282.7 369.7 1285.8 375.5 1282.1 381.4 1286.9 387.3 1284.2 393.1 1285.5 399" stroke="#ffc8a0" stroke-width="1.2"/>
<path d="M1282.1 381.4 1279.9 385.8 1277.8 390.2 1273.9 394.6 1270.5 399" stroke="#ffc8a0" stroke-width="0.8"/>
<path d="M1305.8 349.8 1303.8 356 1304.9 362.1 1305 368.3 1301.9 374.4 1306.2 380.6 1301.8 386.7 1302.5 392.9 1302.8 399" stroke="#ffc8a0" stroke-width="1.2"/>
<path d="M1305 368.3 1302.8 376 1296.7 383.6 1296.7 391.3 1292.2 399" stroke="#ffc8a0" stroke-width="0.8"/>
<path d="M1260 318 1272 322 1285 321 1298 327 1312 332 1326 338 1345 344M1264 326 1280 322 1296 318 1312 316 1330 312 1345 314M1298 327 1310 322 1322 324 1336 320 1345 322M1285 321 1290 312 1300 308" stroke="#ffd4b4" stroke-width="1.300"/>
</g>
<rect x="916" y="398.500" width="429" height="3.500" fill="#4e343c" opacity=".8" filter="url(#b1)"/>
<g filter="url(#b1)" fill="#fff0c4">
<ellipse cx="1079" cy="413.500" rx="8" ry="2"/><ellipse cx="1129" cy="413.500" rx="8" ry="2"/><ellipse cx="1207" cy="413.500" rx="14" ry="2"/><ellipse cx="1334" cy="414" rx="9" ry="2"/><ellipse cx="1064" cy="420.600" rx="42" ry="2.200"/><ellipse cx="1026" cy="420" rx="7" ry="2"/>
</g>
<g filter="url(#b05)">
<path id="hill" d="M916 327 922 334 934 352 944 362 952 368 960 380 969 388 980 396 990 402 1002 411 1013 418 1024 430 1038 442 1048 452 1056 460 1064 468 1072 473 1086 481 1098 486 1110 492 1124 497 1142 503 1160 509 1178 515 1196 521H916z" fill="#2a221f"/>
</g>
<rect x="916" y="320" width="290" height="201" fill="#000" filter="url(#rock)" clip-path="url(#hillclip)"/>
</g>
<defs><clipPath id="hillclip"><path d="M916 329 922 336 934 354 944 364 952 370 960 382 969 390 980 398 990 404 1002 413 1013 420 1024 432 1038 444 1048 454 1056 462 1064 470 1072 475 1086 483 1098 488 1110 494 1124 499 1142 505 1160 511 1178 517 1190 521H916z"/></clipPath></defs>
<defs>
<clipPath id="cl2"><rect x="931" y="546" width="414" height="296"/></clipPath>
<linearGradient id="fog1" x1="0" y1="0" x2="0" y2="1"><stop offset="0" stop-color="#8c8d87"/><stop offset=".4" stop-color="#93938f"/><stop offset=".75" stop-color="#959592"/><stop offset="1" stop-color="#91918f"/></linearGradient>
<filter id="fgn" x="0" y="0" width="100%" height="100%" color-interpolation-filters="sRGB"><feTurbulence type="fractalNoise" baseFrequency=".035 .03" numOctaves="2" seed="3" result="n"/><feColorMatrix in="n" type="matrix" values="0 0 0 0 .3  0 0 0 0 .3  0 0 0 0 .29  1.6 0 0 0 -.62"/><feComposite in2="SourceGraphic" operator="in"/></filter>
</defs>
<!-- fog photo -->
<g clip-path="url(#cl2)">
<rect x="931" y="546" width="414" height="296" fill="url(#fog1)"/>
<g filter="url(#b14)">
<path d="M920 536H1012L1038 578 1054 612 1060 650 1064 720 1040 775 990 800 920 830z" fill="#747570"/>
<path d="M920 536H985L998 590 975 640 920 660z" fill="#666862"/>
<path d="M1226 536H1356V800L1310 790 1262 760 1238 700 1226 640 1200 610 1224 585z" fill="#6d6d6a"/>
<path d="M1270 620H1356V790L1300 780z" fill="#5f5f5d"/>
<ellipse cx="1140" cy="700" rx="72" ry="44" fill="#a1a19d"/>
<ellipse cx="1130" cy="815" rx="175" ry="38" fill="#a0a09e"/>
<ellipse cx="1300" cy="836" rx="70" ry="22" fill="#8c8c8a"/>
<ellipse cx="955" cy="836" rx="46" ry="22" fill="#848482"/>
</g>
<rect x="931" y="546" width="414" height="296" fill="#000" filter="url(#fgn)" opacity=".2"/>
<g filter="url(#b5)">
<path d="M1015 540H1220.500L1222 582 1184 592 1181 612 1204 622 1197 645 1161 651 1118 655 1105 666 1086 658 1059 638 1054 612 1039 579z" fill="#cfd0d1"/>
<path d="M1040 540H1205L1200 580 1170 590 1165 620 1120 640 1080 636 1066 600z" fill="#d6d7d8"/>
</g>
<g filter="url(#b8)" opacity=".8">
<ellipse cx="1150" cy="668" rx="60" ry="12" fill="#a2a29e"/>
</g>
<g filter="url(#b1)" fill="none" stroke="#c8c8c8" stroke-linecap="round">
<path d="M1094 781c8 12 20 22 38 34 14 9 30 17 50 25" stroke-width="2.200"/>
<path d="M1099 780c8 11 22 21 40 32 14 9 28 15 46 22" stroke-width="1.200" opacity=".6"/>
</g>
</g>
</svg>
</div>
<div class="abs" style="left:5px;top:130px;width:15px;height:15px;border-radius:3.500px;background:#2e2e2e;z-index:3"></div>
<svg class="abs" style="left:8px;top:132.500px;z-index:3" width="9" height="10" viewBox="0 0 9 10"><path d="M4.500 .4 8.400 1.800V5c0 2.300-1.700 3.900-3.900 4.700C2.300 8.900 .6 7.300 .6 5V1.800z" fill="#22c55a"/><path d="M2.600 4.900 4 6.300 6.500 3.600" stroke="#0f6a30" stroke-width="1" fill="none"/></svg>
<div class="abs" style="left:27.500px;top:132.500px;width:10px;height:10px;border-radius:50%;background:#e8573f;box-shadow:0 0 2px 1px rgba(240,140,120,.45);z-index:3"></div>
<svg class="abs" style="left:30px;top:134.500px;z-index:3" width="5" height="6" viewBox="0 0 5 6"><circle cx="2.500" cy="1.700" r="1.500" fill="#f6b4a4"/><path d="M.2 6c0-2 1-3 2.300-3s2.300 1 2.300 3z" fill="#f6b4a4"/></svg>
<div id="toolbar" class="abs">
<!-- mic muted -->
<svg class="abs" style="left:20px;top:3px" width="17" height="15" viewBox="0 0 17 15"><rect x="6.200" y="1" width="4.600" height="7.600" rx="2.300" fill="#ababab"/><path d="M4.300 6.800c0 2.700 1.900 4.200 4.200 4.200s4.200-1.500 4.200-4.200M8.500 11v2.200M6 13.400h5" stroke="#ababab" stroke-width="1.100" fill="none"/><path d="M13.800 .8 3.400 13.800" stroke="#c23a3a" stroke-width="1.200"/></svg>
<div class="tb" style="left:28.500px">Unmute</div>
<svg class="abs" style="left:45px;top:8px" width="7" height="5" viewBox="0 0 7 5"><path d="M1 3.800 3.500 1.400 6 3.800" stroke="#c8c8c8" stroke-width="1" fill="none"/></svg>
<!-- video off -->
<svg class="abs" style="left:78px;top:3px" width="19" height="15" viewBox="0 0 19 15"><rect x="2" y="3.500" width="10.500" height="8" rx="1.600" fill="#ababab"/><path d="M13 6.600 16.600 4.200v6.600L13 8.400z" fill="#ababab"/><path d="M15 .8 3.400 14" stroke="#c23a3a" stroke-width="1.200"/></svg>
<div class="tb" style="left:86.500px">Start Video</div>
<svg class="abs" style="left:106.500px;top:8px" width="7" height="5" viewBox="0 0 7 5"><path d="M1 3.800 3.500 1.400 6 3.800" stroke="#c8c8c8" stroke-width="1" fill="none"/></svg>
<!-- participants -->
<svg class="abs" style="left:568px;top:4.500px" width="17" height="12" viewBox="0 0 17 12"><circle cx="5.600" cy="3" r="2.700" fill="#cfcfcf"/><path d="M.6 11.400c0-3.200 2-5 5-5s5 1.800 5 5z" fill="#cfcfcf"/><circle cx="12.600" cy="4.200" r="2.100" fill="#cfcfcf"/><path d="M11.400 11.400c0-1.800-.5-3.200-1.500-4.200.8-.5 1.700-.7 2.700-.7 2.400 0 3.900 1.500 3.900 4.900z" fill="#cfcfcf"/></svg>
<div class="abs" style="left:586.500px;top:5.500px;font-size:7.800px;line-height:8px;color:#d8d8d8">31</div>
<div class="tb" style="left:576.300px">Participants</div>
<svg class="abs" style="left:606px;top:8px" width="7" height="5" viewBox="0 0 7 5"><path d="M1 3.800 3.500 1.400 6 3.800" stroke="#c8c8c8" stroke-width="1" fill="none"/></svg>
<!-- chat -->
<svg class="abs" style="left:635px;top:4.500px" width="14" height="12" viewBox="0 0 14 12"><path d="M2.300 .5h8.800c1 0 1.800.8 1.800 1.800v4.600c0 1-.8 1.800-1.800 1.800H6.400L3.200 11.500V8.700h-.9c-1 0-1.800-.8-1.800-1.800V2.300c0-1 .8-1.800 1.800-1.800z" fill="#cfcfcf"/></svg>
<div class="abs" style="left:644.300px;top:1.500px;width:9px;height:9px;border-radius:50%;background:#e02a2a;color:#fff;font-size:6.500px;font-weight:bold;line-height:9px;text-align:center">1</div>
<div class="tb" style="left:642px">Chat</div>
<!-- share -->
<div class="abs" style="left:690px;top:5px;width:15px;height:11px;border-radius:2px;background:#23d959"></div>
<svg class="abs" style="left:694px;top:6.500px" width="7" height="8" viewBox="0 0 7 8"><path d="M3.500 7.500V2M1.200 3.800 3.500 1.200 5.800 3.800" stroke="#10301a" stroke-width="1.300" fill="none"/></svg>
<div class="tb" style="left:697.200px;color:#23c956">Share Screen</div>
<!-- record -->
<div class="abs" style="left:746.700px;top:4px;width:13px;height:13px;border-radius:50%;border:1.200px solid #bdbdbd"></div>
<div class="abs" style="left:748.900px;top:6.200px;width:8.600px;height:8.600px;border-radius:50%;background:#bdbdbd"></div>
<div class="tb" style="left:752.700px">Record</div>
<!-- english -->
<div class="abs" style="left:795.700px;top:3px;width:15px;height:15px;border-radius:50%;background:#d2d2d2;color:#222;font-size:7px;font-weight:bold;line-height:15px;text-align:center;letter-spacing:-.2px">EN</div>
<div class="tb" style="left:803.200px">English</div>
<!-- reactions -->
<svg class="abs" style="left:846px;top:2.500px" width="16" height="16" viewBox="0 0 16 16"><circle cx="7.200" cy="8.400" r="5.800" fill="#cfcfcf"/><circle cx="5.200" cy="7" r=".9" fill="#222"/><circle cx="9.200" cy="7" r=".9" fill="#222"/><path d="M4.400 9.400c.6 1.500 1.600 2.200 2.800 2.200s2.200-.7 2.800-2.200z" fill="#222"/><path d="M12.600 .8v4M10.600 2.800h4" stroke="#cfcfcf" stroke-width="1.100"/></svg>
<div class="tb" style="left:852.800px">Reactions</div>
<!-- leave -->
<div class="abs" style="left:1314px;top:8px;width:38px;height:17px;border-radius:4px;background:#cc2b2b;color:#fff;font-size:7.400px;font-weight:bold;line-height:17px;text-align:center">Leave</div>
</div>
<div id="panel" class="abs">
<svg width="0" height="0" style="position:absolute"><defs>
<filter id="tb05" x="-10%" y="-10%" width="120%" height="120%"><feGaussianBlur stdDeviation=".45"/></filter>
<symbol id="pmic" viewBox="0 0 10 11"><rect x="3.700" y="1.200" width="2.600" height="5" rx="1.300" fill="none" stroke="#e46e6e" stroke-width=".8"/><path d="M2.300 5.200c0 1.800 1.200 2.800 2.700 2.800s2.700-1 2.700-2.800M5 8v1.700M3.600 9.800h2.800" stroke="#e46e6e" stroke-width=".8" fill="none"/><path d="M8.300 .8 2 10.200" stroke="#e46e6e" stroke-width=".9"/></symbol>
<symbol id="pmicon" viewBox="0 0 10 11"><rect x="3.500" y="1" width="3" height="5.400" rx="1.500" fill="#8a8a92"/><path d="M2.300 5.200c0 1.800 1.200 2.800 2.700 2.800s2.700-1 2.700-2.800M5 8v1.700M3.600 9.800h2.800" stroke="#8a8a92" stroke-width=".8" fill="none"/></symbol>
<symbol id="pmicout" viewBox="0 0 10 11"><rect x="3.700" y="1.200" width="2.600" height="5" rx="1.300" fill="none" stroke="#8a8a92" stroke-width=".8"/><path d="M2.300 5.200c0 1.800 1.200 2.800 2.700 2.800s2.700-1 2.700-2.800M5 8v1.700M3.600 9.800h2.800" stroke="#8a8a92" stroke-width=".8" fill="none"/></symbol>
<symbol id="pcam" viewBox="0 0 12 11"><rect x="1.200" y="2.800" width="7.200" height="5.600" rx="1" fill="none" stroke="#e46e6e" stroke-width=".8"/><path d="M8.400 5 10.800 3.400v4.600L8.400 6.400" fill="none" stroke="#e46e6e" stroke-width=".8"/><path d="M10.200 1.200 2.200 9.800" stroke="#e46e6e" stroke-width=".9"/></symbol>
<symbol id="pcamon" viewBox="0 0 12 11"><rect x="1.200" y="2.800" width="7.200" height="5.600" rx="1" fill="none" stroke="#7a7a84" stroke-width=".8"/><path d="M8.400 5 10.800 3.400v4.600L8.400 6.400" fill="none" stroke="#7a7a84" stroke-width=".8"/></symbol>
</defs></svg>
<svg class="abs" style="left:164px;top:2px" width="70" height="9" viewBox="0 0 70 9"><path d="M1 4.500h6.600" stroke="#222" stroke-width=".8"/><path d="M29.500 2.500h5.300v5.300h-5.300zM30.800 2.500V1.200h5.300v5.300h-1.300" stroke="#222" stroke-width=".8" fill="none"/><path d="M58.500 1.300l6 6M64.500 1.300l-6 6" stroke="#222" stroke-width=".8"/></svg>
<svg class="abs" style="left:11px;top:26px" width="8" height="5" viewBox="0 0 8 5"><path d="M1.500 1 4 3.500 6.500 1" stroke="#555" stroke-width="1" fill="none"/></svg>
<div class="abs" style="left:0;width:241px;top:23px;text-align:center;font-size:8.100px;font-weight:bold;color:#2a2a2a;line-height:11px">Participants (31)</div>
<div class="abs" style="left:12px;top:48.500px;width:219px;height:19px;border:1px solid #cbcbd0;border-radius:4px"></div>
<svg class="abs" style="left:18px;top:54px" width="9" height="9" viewBox="0 0 9 9"><circle cx="3.700" cy="3.700" r="2.700" fill="none" stroke="#777" stroke-width=".8"/><path d="M5.700 5.700 8 8" stroke="#777" stroke-width=".8"/></svg>
<div class="abs" style="left:28.500px;top:52.500px;font-size:8px;line-height:11px;color:#777">Find a participant</div>
<div class="abs" style="left:235.500px;top:69px;width:4.500px;height:776px;background:#ececf0;border-radius:2px"></div>
<div class="abs" style="left:235.700px;top:85px;width:4px;height:755px;background:#a3a5b0;border-radius:2px"></div>
<div class="row" style="top:72.9px"><div class="av" style="border-radius:0;background:#fff"><svg width="17" height="17" viewBox="0 0 17 17"><g filter="url(#tb05)"><rect x="2.5" y="1.6" width="5" height="1.5" fill="#f0a050"/><rect x="2.5" y="4.2" width="9" height="1.7" fill="#f0a050"/><rect x="2.5" y="6.9" width="13" height="1.8" fill="#f2a860"/><path d="M3 11 5 15.200 7 11.600 8.500 15.200 11 11.200 12 15.200 14.500 11" stroke="#2a3a78" stroke-width="1.500" fill="none"/><rect x="1.5" y="11" width="2" height="1.300" fill="#2a3a78"/></g></svg></div><div class="pn">Suport Tehnic (Host)</div><svg class="ic" style="left:185.5px;top:4px" width="10" height="10" viewBox="0 0 10 10"><circle cx="5" cy="5" r="3.900" fill="none" stroke="#e08a8a" stroke-width=".8"/><circle cx="5" cy="5" r="1.300" fill="#e07070"/></svg><svg class="ic" style="left:200.5px" width="10" height="11"><use href="#pmic"/></svg><svg class="ic" style="left:215.0px" width="12" height="11"><use href="#pcam"/></svg></div>
<div class="row" style="top:98.5px"><div class="av" style="background:#1a9c7c">EB</div><div class="pn">Ercan Büyükbaş</div><svg class="ic" style="left:185.5px;top:5px" width="10" height="8" viewBox="0 0 10 8"><rect width="10" height="7.400" rx=".8" fill="#12a53c"/><path d="M5 5.800V2.600M3.600 3.800 5 2.200 6.400 3.800" stroke="#d8ffe0" stroke-width=".9" fill="none"/></svg><svg class="ic" style="left:200.5px" width="10" height="11"><use href="#pmic"/></svg><svg class="ic" style="left:215.0px" width="12" height="11"><use href="#pcam"/></svg></div>
<div class="row" style="top:124.2px"><div class="av" style="background:#c8c8c8"><svg width="17" height="17" viewBox="0 0 17 17"><g filter="url(#tb05)"><rect width="17" height="17" fill="#cfcfcf"/><path d="M0 12 5 10.500 8.500 14 12 10.500 17 12V17H0z" fill="#1c1a1c"/><path d="M6 11.500 8.500 10.500 11 11.500 9.500 17H7.500z" fill="#e8d4de"/><ellipse cx="8.500" cy="6.500" rx="3.800" ry="4.800" fill="#c48c74"/><path d="M4.500 4.500C4.500 1.500 6.500 .3 8.500 .3s4.300 1.200 4 4.400c-1-1.500-2-2-4-2s-3 .6-4 1.800z" fill="#3a3432"/></g></svg></div><div class="pn">Ercan Büyükbaş</div><svg class="ic" style="left:200.5px" width="10" height="11"><use href="#pmicon"/></svg><svg class="ic" style="left:215.0px" width="12" height="11"><use href="#pcam"/></svg></div>
<div class="row" style="top:149.8px"><div class="av" style="background:#2c3e57">DL</div><div class="pn">Diana Loznean (Interpreter)</div><div class="ic" style="left:185.5px;top:4px;width:10px;height:10px;border-radius:50%;background:#e4e4e8;color:#333;font-size:4.200px;font-weight:bold;line-height:10px;text-align:center">RO</div><svg class="ic" style="left:200.5px" width="10" height="11"><use href="#pmicout"/></svg><svg class="ic" style="left:215.0px" width="12" height="11"><use href="#pcam"/></svg></div>
<div class="row" style="top:175.5px"><div class="av" style="background:#8d3fb1">AL</div><div class="pn">ANRE, Lilian Barcaru</div><svg class="ic" style="left:200.5px" width="10" height="11"><use href="#pmic"/></svg><svg class="ic" style="left:215.0px" width="12" height="11"><use href="#pcam"/></svg></div>
<div class="row" style="top:201.1px"><div class="av" style="background:#8d3fb1">CB</div><div class="pn">Corina Bantos</div><svg class="ic" style="left:200.5px" width="10" height="11"><use href="#pmic"/></svg><svg class="ic" style="left:215.0px" width="12" height="11"><use href="#pcam"/></svg></div>
<div class="row" style="top:226.7px"><div class="av" style="background:#1f9c78">DC</div><div class="pn">Dorin Cebanu IP ICCC „Selecția"</div><svg class="ic" style="left:200.5px" width="10" height="11"><use href="#pmic"/></svg><svg class="ic" style="left:215.0px" width="12" height="11"><use href="#pcam"/></svg></div>
<div class="row" style="top:252.4px"><div class="av" style="background:#8a6a58"><svg width="17" height="17" viewBox="0 0 17 17"><g filter="url(#tb05)"><rect width="17" height="17" fill="#7a5a48"/><rect x="0" y="0" width="4" height="8" fill="#d8a0a0"/><ellipse cx="9" cy="8" rx="4.600" ry="6.200" fill="#d0a692"/><path d="M0 12 4 9 5 17H0zM13 9l4 3v5h-5z" fill="#a07858"/></g></svg></div><div class="pn">Ecaterina Melnicenco| NAP-2</div><svg class="ic" style="left:200.5px" width="10" height="11"><use href="#pmic"/></svg><svg class="ic" style="left:215.0px" width="12" height="11"><use href="#pcam"/></svg></div>
<div class="row" style="top:278.0px"><div class="av" style="background:#c7382c">GI</div><div class="pn">Gadiac Ivan</div><svg class="ic" style="left:216.0px" width="10" height="11"><use href="#pmic"/></svg></div>
<div class="row" style="top:303.7px"><div class="av" style="background:#eaa52a">GC</div><div class="pn">Grigore Cațer</div><svg class="ic" style="left:200.5px" width="10" height="11"><use href="#pmic"/></svg><svg class="ic" style="left:215.0px" width="12" height="11"><use href="#pcam"/></svg></div>
<div class="row" style="top:329.3px"><div class="av" style="background:#2fa852">IP</div><div class="pn">IF Porumbeni</div><svg class="ic" style="left:200.5px" width="10" height="11"><use href="#pmic"/></svg><svg class="ic" style="left:215.0px" width="12" height="11"><use href="#pcam"/></svg></div>
<div class="row" style="top:354.9px"><div class="av" style="background:#cf5b14">IC</div><div class="pn">Inesa Coman (Interpreter)</div><div class="ic" style="left:185.5px;top:4px;width:10px;height:10px;border-radius:50%;background:#e4e4e8;color:#333;font-size:4.200px;font-weight:bold;line-height:10px;text-align:center">RO</div><svg class="ic" style="left:200.5px" width="10" height="11"><use href="#pmic"/></svg><svg class="ic" style="left:215.0px" width="12" height="11"><use href="#pcam"/></svg></div>
<div class="row" style="top:380.6px"><div class="av" style="background:#ec7b18">I</div><div class="pn">Inga Capraru</div><svg class="ic" style="left:200.5px" width="10" height="11"><use href="#pmic"/></svg><svg class="ic" style="left:215.0px" width="12" height="11"><use href="#pcam"/></svg></div>
<div class="row" style="top:406.2px"><div class="av" style="background:#cf5b14">IP</div><div class="pn">Irina Punga</div><svg class="ic" style="left:200.5px" width="10" height="11"><use href="#pmic"/></svg><svg class="ic" style="left:215.0px" width="12" height="11"><use href="#pcam"/></svg></div>
<div class="row" style="top:431.9px"><div class="av" style="background:#2c3e57">LS</div><div class="pn">Larisa Sorocovici</div><svg class="ic" style="left:216.0px" width="10" height="11"><use href="#pmic"/></svg></div>
<div class="row" style="top:457.5px"><div class="av" style="background:#2b7dc0">LC</div><div class="pn">Lilian Cernalevschi Premier Energy D</div><svg class="ic" style="left:216.0px" width="10" height="11"><use href="#pmic"/></svg></div>
<div class="row" style="top:483.1px"><div class="av" style="background:#2fa852">LC</div><div class="pn">Liliana Carp</div><svg class="ic" style="left:216.0px" width="10" height="11"><use href="#pmic"/></svg></div>
<div class="row" style="top:508.8px"><div class="av" style="background:#2c3e57">MG</div><div class="pn">Mariana Gincu</div><svg class="ic" style="left:200.5px" width="10" height="11"><use href="#pmic"/></svg><svg class="ic" style="left:215.0px" width="12" height="11"><use href="#pcam"/></svg></div>
<div class="row" style="top:534.4px"><div class="av" style="background:#e0e0e0"><svg width="17" height="17" viewBox="0 0 17 17"><g filter="url(#tb05)"><rect width="17" height="17" fill="#e4e2e2"/><path d="M4 16c-1.500-4-1.500-10 .5-12.500C6 1.800 11 1.800 12.500 3.500 14.500 6 14.500 12 13 16z" fill="#2a1c1a"/><ellipse cx="8.500" cy="7.800" rx="3.200" ry="4.200" fill="#e0b8a4"/><path d="M5.500 17c0-3 1.500-4.500 3-4.500s3 1.500 3 4.500z" fill="#c8304a"/></g></svg></div><div class="pn">PA EcoContact Guranda Natalia Aarhus Ce...</div><svg class="ic" style="left:200.5px" width="10" height="11"><use href="#pmic"/></svg><svg class="ic" style="left:215.0px" width="12" height="11"><use href="#pcamon"/></svg></div>
<div class="row" style="top:560.1px"><div class="av" style="border-radius:0;background:#fff"><svg width="17" height="17" viewBox="0 0 17 17"><g filter="url(#tb05)"><path d="M6.500 .8C4 2 2 4 1.200 7.500c1.500.2 3.500-1 5.500-1.500 1.500-.4 2.500-.3 3.500 0C10 4 9 1.500 6.500 .8z" fill="#1a8a1c"/><path d="M5.200 7 4.600 13M6 7 6.800 13" stroke="#e8713c" stroke-width=".8" fill="none"/><path d="M1.500 14.500c3-2 7-2 11 0" stroke="#8b5e3c" stroke-width="1" fill="none"/><path d="M6 15c2-.8 4 .8 7 0" stroke="#3a94c8" stroke-width=".8" fill="none"/><circle cx="9.500" cy="3.500" r="1.800" fill="none" stroke="#f0a040" stroke-width=".6"/></g><text x="7.200" y="12.800" font-size="5" font-weight="bold" fill="#1d8a1d" font-family="Liberation Sans, sans-serif">NAP</text></svg></div><div class="pn">Pavel Gavrilita</div><svg class="ic" style="left:200.5px" width="10" height="11"><use href="#pmic"/></svg><svg class="ic" style="left:215.0px" width="12" height="11"><use href="#pcam"/></svg></div>
<div class="row" style="top:585.7px"><div class="av" style="background:#eaa52a">RP</div><div class="pn">Rotaru Petru</div><svg class="ic" style="left:200.5px" width="10" height="11"><use href="#pmic"/></svg><svg class="ic" style="left:215.0px" width="12" height="11"><use href="#pcam"/></svg></div>
<div class="row" style="top:611.3px"><div class="av" style="background:#c0392b">RP</div><div class="pn">Ruslan Postovan ASD</div><svg class="ic" style="left:200.5px" width="10" height="11"><use href="#pmic"/></svg><svg class="ic" style="left:215.0px" width="12" height="11"><use href="#pcam"/></svg></div>
<div class="row" style="top:637.0px"><div class="av" style="background:#cf5b14">SB</div><div class="pn">Sergiu Bucataru</div><svg class="ic" style="left:200.5px" width="10" height="11"><use href="#pmic"/></svg><svg class="ic" style="left:215.0px" width="12" height="11"><use href="#pcam"/></svg></div>
<div class="row" style="top:662.6px"><div class="av" style="background:#cf5b14">SH</div><div class="pn">State Hydrometeorological Service</div><svg class="ic" style="left:200.5px" width="10" height="11"><use href="#pmic"/></svg><svg class="ic" style="left:215.0px" width="12" height="11"><use href="#pcam"/></svg></div>
<div class="row" style="top:688.3px"><div class="av" style="background:#1a9c7c">TS</div><div class="pn">Tatiana Smolenscaia</div><svg class="ic" style="left:216.0px" width="10" height="11"><use href="#pmic"/></svg></div>
<div class="row" style="top:713.9px"><div class="av" style="background:#2fa852">VI</div><div class="pn">Vahtin Ion</div><svg class="ic" style="left:200.5px" width="10" height="11"><use href="#pmic"/></svg><svg class="ic" style="left:215.0px" width="12" height="11"><use href="#pcam"/></svg></div>
<div class="row" style="top:739.5px"><div class="av" style="background:#2fa852">VO</div><div class="pn">Veronica Onesciuc</div><svg class="ic" style="left:200.5px" width="10" height="11"><use href="#pmic"/></svg><svg class="ic" style="left:215.0px" width="12" height="11"><use href="#pcam"/></svg></div>
<div class="row" style="top:765.2px"><div class="av" style="background:#c7382c">V</div><div class="pn">Victor</div><svg class="ic" style="left:200.5px" width="10" height="11"><use href="#pmic"/></svg><svg class="ic" style="left:215.0px" width="12" height="11"><use href="#pcam"/></svg></div>
<div class="row" style="top:790.8px"><div class="av" style="background:#2b7dc0">VS</div><div class="pn">Viorica Staver</div><svg class="ic" style="left:200.5px" width="10" height="11"><use href="#pmic"/></svg><svg class="ic" style="left:215.0px" width="12" height="11"><use href="#pcam"/></svg></div>
<div class="row" style="top:816.5px"><div class="av" style="background:#a342c4">V</div><div class="pn">Vitalie Tcaciuc PED</div><svg class="ic" style="left:200.5px" width="10" height="11"><use href="#pmic"/></svg><svg class="ic" style="left:215.0px" width="12" height="11"><use href="#pcam"/></svg></div>
<div class="btn" style="left:55.500px;width:27px">Invite</div>
<div class="btn" style="left:137.500px;width:48px">Unmute Me</div>
</div>
<div id="taskbar" class="abs">
<!-- start -->
<svg class="abs" style="left:10px;top:8.500px" width="11" height="11" viewBox="0 0 11 11"><path d="M0 1.500 4.600 .9V5.200H0zM5.200 .8 11 0V5.200H5.200zM0 5.800H4.600V10.100L0 9.500zM5.200 5.800H11V11L5.200 10.200z" fill="#fff"/></svg>
<div class="abs" style="left:39.500px;top:8.200px;width:10.600px;height:10.600px;border-radius:50%;border:1.500px solid #fff"></div>
<svg class="abs" style="left:69px;top:8px" width="12" height="11" viewBox="0 0 12 11"><path d="M1.500 2.500h6.500v6h-6.500zM.5 .8v1M9 .8v1M.5 9.400v1M9 9.400v1M10.500 3v1.200M10.500 6.800v1.400" stroke="#fff" stroke-width="1" fill="none"/></svg>
<!-- skype -->
<div class="abs" style="left:99.500px;top:6.200px;width:14.500px;height:14.500px;border-radius:50%;background:#10a5e4;color:#fff;font-weight:bold;font-size:10px;line-height:14.500px;text-align:center">S</div>
<!-- grammarly -->
<div class="abs" style="left:130.500px;top:6.200px;width:14.500px;height:14.500px;border-radius:50%;background:#14b88a"></div>
<svg class="abs" style="left:133px;top:8.700px" width="10" height="10" viewBox="0 0 10 10"><path d="M8 3A3.600 3.600 0 1 0 8.600 5.400H5.600M8.600 5.400V8.400" stroke="#fff" stroke-width="1.400" fill="none"/></svg>
<!-- zoom active -->
<div class="abs" style="left:153px;top:0;width:30px;height:26px;background:#4d5d66"></div>
<div class="abs" style="left:153px;top:24.500px;width:30px;height:1.500px;background:#a8d0ee"></div>
<svg class="abs" style="left:161px;top:6px" width="14" height="14" viewBox="0 0 14 14"><rect width="14" height="14" rx="3.600" fill="#4a8cf7"/><rect x="2.600" y="4.600" width="6" height="4.800" rx="1.100" fill="#fff"/><path d="M9.100 6.400 11.600 4.800v4.400L9.100 7.600z" fill="#fff"/></svg>
<!-- outlook -->
<svg class="abs" style="left:191px;top:5.500px" width="16" height="15" viewBox="0 0 16 15"><rect x="5" y="1" width="10.500" height="12" rx="1" fill="#1a8ae0"/><rect x="8" y="1" width="7.500" height="4" fill="#3ab0f4"/><rect x="8" y="9" width="7.500" height="4" fill="#0d5eb0"/><rect x="0" y="3.200" width="9" height="9" rx="1.200" fill="#0d6cc8"/><circle cx="4.500" cy="7.700" r="2.300" fill="none" stroke="#fff" stroke-width="1.300"/><rect x="4" y="12.600" width="9" height="1.600" fill="#5ac0f8" opacity=".8"/></svg>
<!-- chrome -->
<svg class="abs" style="left:222px;top:6px" width="15" height="15" viewBox="0 0 15 15"><circle cx="7.500" cy="7.500" r="7.200" fill="#e84235"/><path d="M7.500 7.500 1.300 3.900A7.200 7.200 0 0 0 7.500 14.700L10.600 9.300z" fill="#33a852"/><path d="M7.500 7.500 10.600 9.300 7.500 14.700A7.200 7.200 0 0 0 13.700 3.900H7.500z" fill="#fbbc05"/><circle cx="7.500" cy="7.500" r="3.300" fill="#fff"/><circle cx="7.500" cy="7.500" r="2.600" fill="#4285f4"/></svg>
<!-- teams -->
<svg class="abs" style="left:252px;top:5.500px" width="17" height="16" viewBox="0 0 17 16"><circle cx="9.400" cy="3.200" r="2.400" fill="#6a70d8"/><circle cx="14" cy="4" r="1.700" fill="#6a70d8"/><rect x="5.500" y="6" width="8" height="8.500" rx="2" fill="#5c62cc"/><rect x="12" y="6.200" width="4.600" height="6.600" rx="1.800" fill="#5c62cc"/><rect x="1" y="4" width="8" height="8" rx="1" fill="#4a50b8"/><path d="M3 6.200h4M5 6.200v4.400" stroke="#fff" stroke-width="1.200"/></svg>
<!-- explorer -->
<svg class="abs" style="left:283px;top:6px" width="15" height="13" viewBox="0 0 15 13"><path d="M.5 1.200h5l1.200 1.400H14.500V12H.5z" fill="#f4c63a"/><rect x=".5" y="3.600" width="14" height="8.400" fill="#fbd75c"/><rect x="3" y="7.200" width="9" height="4.800" fill="#3a8ac8"/><rect x="5" y="8.800" width="5" height="3.200" fill="#8cc4ea"/></svg>
<div class="abs" style="left:278px;top:24.500px;width:24.500px;height:1.500px;background:#a8d0ee"></div>
<!-- edge -->
<svg class="abs" style="left:313.500px;top:5.500px" width="17" height="16" viewBox="0 0 17 16"><circle cx="9" cy="7.600" r="7" fill="#1e8ad8"/><path d="M2 7.600A7 7 0 0 1 16 7.200c0 2-1.600 3-3.400 3-2 0-2.600-1-2.200-2 .3-1-.4-2.400-2.400-2.400-3 0-5 2.800-4.400 5.800A7 7 0 0 1 2 7.600z" fill="#3fd08a"/><circle cx="4.500" cy="11.800" r="3.600" fill="#f0f0f0"/><path d="M2.800 12.200 4 11 4 12.400 5.400 11.200 6.200 12.200" stroke="#444" stroke-width=".7" fill="none"/></svg>
<!-- word -->
<svg class="abs" style="left:344.500px;top:5.500px" width="16" height="15" viewBox="0 0 16 15"><rect x="4.500" y=".5" width="11" height="13.500" rx="1" fill="#2b7cd3"/><rect x="4.500" y=".5" width="11" height="3.400" fill="#41a5ee"/><rect x="4.500" y="7.200" width="11" height="3.400" fill="#185abd"/><rect x="4.500" y="10.600" width="11" height="3.400" fill="#103f91"/><rect x="0" y="3" width="9" height="9" rx="1.100" fill="#185abd"/><path d="M2 5.200 3.300 9.800 4.500 6 5.700 9.800 7 5.200" stroke="#fff" stroke-width="1" fill="none"/></svg>
<div class="abs" style="left:339.500px;top:24.500px;width:25px;height:1.500px;background:#a8d0ee"></div>
<!-- tray -->
<svg class="abs" style="left:1368.500px;top:9.500px" width="9" height="6" viewBox="0 0 9 6"><path d="M1 5 4.500 1.500 8 5" stroke="#fff" stroke-width="1.100" fill="none"/></svg>
<svg class="abs" style="left:1383px;top:7px" width="10" height="12" viewBox="0 0 10 12"><rect x="1.500" y="3" width="5" height="6" rx=".8" fill="none" stroke="#fff" stroke-width=".9"/><path d="M6.500 5.400 8.800 4v4L6.500 6.600M2 1.200c1.500-.8 3.500-.8 5 0M2 10.800c1.500.8 3.500.8 5 0" stroke="#fff" stroke-width=".8" fill="none"/></svg>
<svg class="abs" style="left:1398.500px;top:7px" width="9" height="12" viewBox="0 0 9 12"><rect x="2.500" y=".5" width="4" height="7" rx="2" fill="#fff"/><path d="M1 5.800c0 2.200 1.600 3.400 3.500 3.400S8 8 8 5.800M4.500 9.200v2" stroke="#fff" stroke-width=".9" fill="none"/></svg>
<svg class="abs" style="left:1412px;top:8px" width="12" height="10" viewBox="0 0 12 10"><rect x="2.800" y="2.500" width="8.400" height="5" fill="#fff"/><rect x=".5" y="1" width="1.600" height="3.200" fill="#fff"/><path d="M1.300 4v4.500h3" stroke="#fff" stroke-width=".8" fill="none"/></svg>
<svg class="abs" style="left:1426.500px;top:7px" width="13" height="13" viewBox="0 0 13 13"><circle cx="7" cy="2.600" r="1.900" fill="#6a70d8"/><circle cx="10.600" cy="3.400" r="1.300" fill="#6a70d8"/><rect x="4" y="4.800" width="6.400" height="6.600" rx="1.500" fill="#5c62cc"/><rect x=".8" y="3.200" width="6.200" height="6.200" rx=".8" fill="#4a50b8"/><path d="M2.400 4.900h3M3.900 4.900v3.300" stroke="#fff" stroke-width=".9"/><circle cx="10.400" cy="10.600" r="1.900" fill="#d83a3a"/></svg>
<svg class="abs" style="left:1441px;top:9px" width="14" height="9" viewBox="0 0 14 9"><path d="M3.400 8.500A2.800 2.800 0 0 1 3 3a3.800 3.800 0 0 1 7.200-.6A3.100 3.100 0 0 1 10.800 8.500z" fill="#1a90e8"/></svg>
<svg class="abs" style="left:1455.500px;top:8px" width="15" height="12" viewBox="0 0 15 12"><path d="M3.400 8.500A2.800 2.800 0 0 1 3 3a3.800 3.800 0 0 1 7.200-.6A3.100 3.100 0 0 1 10.800 8.500z" fill="#dcdcdc"/><circle cx="10.800" cy="8.600" r="2.600" fill="#e03838"/></svg>
<svg class="abs" style="left:1473.500px;top:8px" width="11" height="10" viewBox="0 0 11 10"><path d="M1 9.500A8.600 8.600 0 0 1 9.800 1M3.600 9.500A6 6 0 0 1 9.800 3.600M6.200 9.500A3.400 3.400 0 0 1 9.800 6.200" stroke="#cfd6da" stroke-width="1" fill="none"/><circle cx="9.300" cy="9" r=".9" fill="#cfd6da"/></svg>
<svg class="abs" style="left:1487px;top:8px" width="11" height="10" viewBox="0 0 11 10"><path d="M.8 3.600h1.800L5 1.400v7.200L2.600 6.400H.8zM6.600 3.200c.8 1 .8 2.600 0 3.600M8.200 1.800c1.500 1.800 1.500 4.600 0 6.400" stroke="#fff" stroke-width=".9" fill="none"/></svg>
<div class="tr" style="left:1511.500px;top:9px;font-size:7.200px;letter-spacing:-.15px">ENG</div>
<div class="tr" style="left:1544.700px;top:2.800px;font-size:7.500px;letter-spacing:-.3px">11:34</div>
<div class="tr" style="left:1544.700px;top:14.600px;font-size:7.500px;letter-spacing:-.28px">03/12/2021</div>
<svg class="abs" style="left:1574px;top:5.500px" width="15" height="15" viewBox="0 0 15 15"><path d="M1 1h9.500v7.500H4.500L2.500 10.500V8.500H1z" fill="none" stroke="#fff" stroke-width="1"/><path d="M3 3.400h5.500M3 5.800h5.500" stroke="#fff" stroke-width=".8"/><circle cx="10.200" cy="10.600" r="3.800" fill="#24363f" stroke="#cfd6da" stroke-width=".7"/><text x="10.200" y="12.600" font-size="5.400" fill="#fff" text-anchor="middle" font-family="Liberation Sans, sans-serif">35</text></svg>
<div class="abs" style="left:1596.500px;top:2px;width:1px;height:22px;background:#6a7a84"></div>
</div>
</body></html>
